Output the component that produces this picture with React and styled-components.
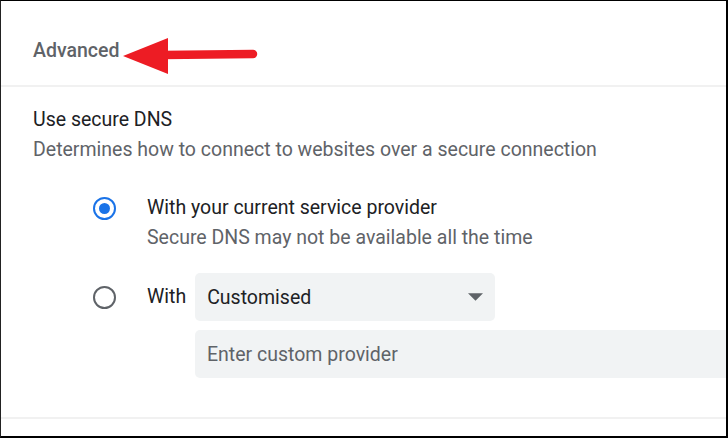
import React from "react";
import styled, { createGlobalStyle } from "styled-components";

const GlobalStyle = createGlobalStyle`
  html, body {
    margin: 0;
    padding: 0;
    background: #fff;
  }
  body {
    font-family: Roboto, "Liberation Sans", sans-serif;
  }
`;

export default function App() {
  return (
    <>
      <GlobalStyle />
      <Frame>
        <Header>
          <Heading>Advanced</Heading>
          <Arrow />
        </Header>
        <Section>
          <Title>Use secure DNS</Title>
          <Description>
            Determines how to connect to websites over a secure connection
          </Description>
          <RadioGroup>
            <Option>
              <Radio checked />
              <OptionText>
                <Primary>With your current service provider</Primary>
                <Description>Secure DNS may not be available all the time</Description>
              </OptionText>
            </Option>
            <Option>
              <Radio />
              <OptionText>
                <CustomRow>
                  <Primary>With</Primary>
                  <Select>
                    Customised
                    <Caret viewBox="0 0 14 7">
                      <path d="M0 0h14L7 7z" />
                    </Caret>
                  </Select>
                </CustomRow>
                <ProviderInput placeholder="Enter custom provider" />
              </OptionText>
            </Option>
          </RadioGroup>
        </Section>
      </Frame>
    </>
  );
}

function Arrow() {
  return (
    <ArrowSvg viewBox="0 0 136 42" width="136" height="42">
      <line
        x1="40"
        y1="20"
        x2="130"
        y2="19"
        stroke="#ed1c24"
        strokeWidth="8.5"
        strokeLinecap="round"
      />
      <polygon points="0,21 45,3 45,39" fill="#ed1c24" />
    </ArrowSvg>
  );
}

const Frame = styled.div`
  box-sizing: border-box;
  width: 728px;
  height: 438px;
  border-top: 1px solid #000;
  border-left: 1px solid #222;
  border-right: 2px solid #000;
  border-bottom: 2px solid #000;
  overflow: hidden;
  background: #fff;
`;

const Header = styled.div`
  box-sizing: border-box;
  display: flex;
  align-items: center;
  height: 86px;
  padding: 15px 0 0 32px;
  border-bottom: 2px solid #f1f1f1;
`;

const Heading = styled.div`
  font-size: 19.5px;
  font-weight: 500;
  color: #5f6368;
`;

const ArrowSvg = styled.svg`
  display: block;
  margin-left: 4px;
  margin-top: 11px;
`;

const Section = styled.div`
  padding: 18px 0 39px 32px;
  border-bottom: 2px solid #f1f1f1;
`;

const Title = styled.div`
  font-size: 19.5px;
  line-height: 30px;
  color: #202124;
`;

const Description = styled.div`
  font-size: 19.5px;
  line-height: 30px;
  color: #5f6368;
`;

const RadioGroup = styled.div`
  display: flex;
  flex-direction: column;
  gap: 20px;
  margin-top: 28px;
  padding-left: 60px;
`;

const Option = styled.div`
  display: flex;
  gap: 31px;
`;

const Radio = styled.span`
  box-sizing: border-box;
  flex: none;
  width: 23px;
  height: 23px;
  margin-top: ${(p) => (p.checked ? "4px" : "13px")};
  border-radius: 50%;
  border: 2.5px solid ${(p) => (p.checked ? "#1a73e8" : "#5f6368")};
  display: flex;
  align-items: center;
  justify-content: center;

  &::after {
    content: "";
    width: 11px;
    height: 11px;
    border-radius: 50%;
    background: ${(p) => (p.checked ? "#1a73e8" : "transparent")};
  }
`;

const OptionText = styled.div`
  display: flex;
  flex-direction: column;
`;

const Primary = styled.div`
  font-size: 19.5px;
  line-height: 30px;
  color: #202124;
`;

const CustomRow = styled.div`
  display: flex;
  align-items: center;
  gap: 9px;
`;

const Select = styled.div`
  box-sizing: border-box;
  display: flex;
  align-items: center;
  justify-content: space-between;
  width: 300px;
  height: 48px;
  padding: 0 12px;
  border-radius: 5px;
  background: #f1f3f4;
  font-size: 19.5px;
  color: #202124;
`;

const Caret = styled.svg`
  width: 15px;
  height: 8px;
  fill: #5f6368;
`;

const ProviderInput = styled.input`
  box-sizing: border-box;
  width: 560px;
  height: 48px;
  margin-top: 9px;
  margin-left: 48px;
  padding: 0 12px;
  border: none;
  border-radius: 5px;
  background: #f1f3f4;
  font-family: Roboto, "Liberation Sans", sans-serif;
  font-size: 19.5px;
  color: #202124;
  outline: none;

  &::placeholder {
    color: #5f6368;
  }
`;
